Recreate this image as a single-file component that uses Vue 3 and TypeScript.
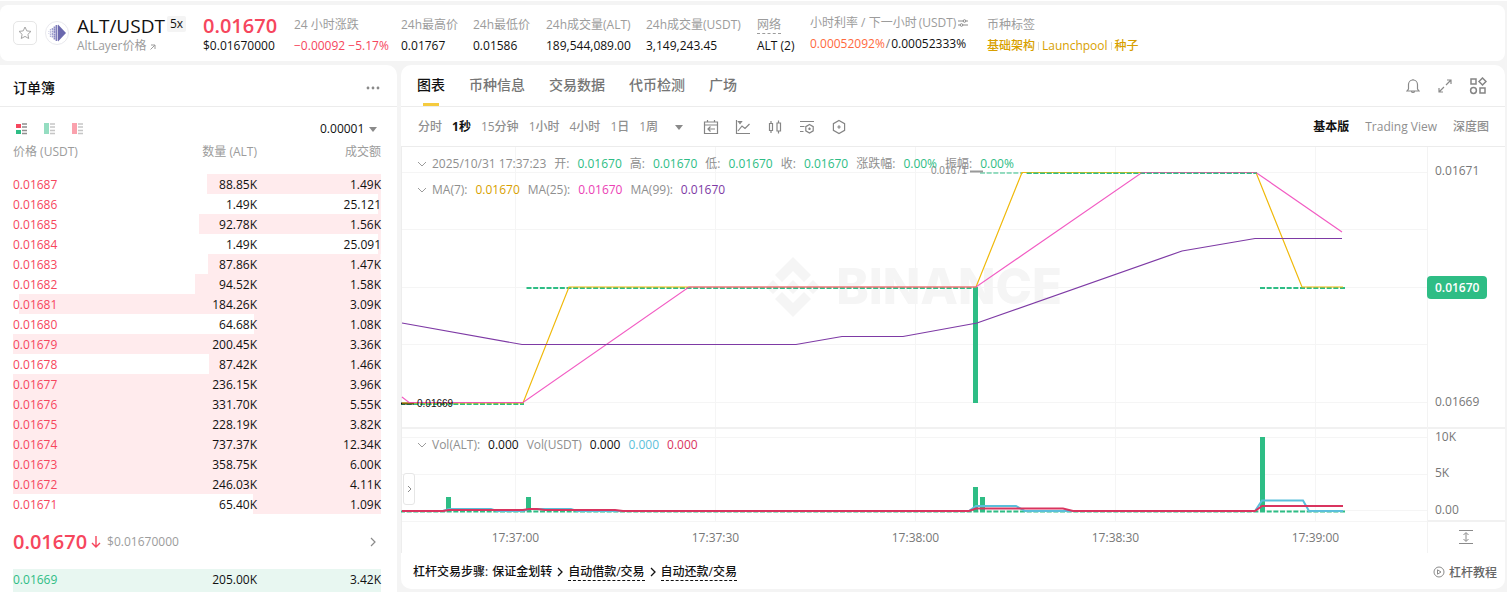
<script setup lang="ts">
interface Level { price: string; amount: string; total: string; depth: number }
interface Stat { label: string; value: string; dotted?: boolean }

const stats: Stat[] = [
  { label: '24h最高价', value: '0.01767' },
  { label: '24h最低价', value: '0.01586' },
  { label: '24h成交量(ALT)', value: '189,544,089.00' },
  { label: '24h成交量(USDT)', value: '3,149,243.45' },
  { label: '网络', value: 'ALT (2)', dotted: true },
]

const asks: Level[] = [
  { price: '0.01687', amount: '88.85K', total: '1.49K', depth: 47.4 },
  { price: '0.01686', amount: '1.49K', total: '25.121', depth: 0.8 },
  { price: '0.01685', amount: '92.78K', total: '1.56K', depth: 49.5 },
  { price: '0.01684', amount: '1.49K', total: '25.091', depth: 0.8 },
  { price: '0.01683', amount: '87.86K', total: '1.47K', depth: 46.9 },
  { price: '0.01682', amount: '94.52K', total: '1.58K', depth: 50.5 },
  { price: '0.01681', amount: '184.26K', total: '3.09K', depth: 98.4 },
  { price: '0.01680', amount: '64.68K', total: '1.08K', depth: 34.5 },
  { price: '0.01679', amount: '200.45K', total: '3.36K', depth: 100 },
  { price: '0.01678', amount: '87.42K', total: '1.46K', depth: 46.7 },
  { price: '0.01677', amount: '236.15K', total: '3.96K', depth: 100 },
  { price: '0.01676', amount: '331.70K', total: '5.55K', depth: 100 },
  { price: '0.01675', amount: '228.19K', total: '3.82K', depth: 100 },
  { price: '0.01674', amount: '737.37K', total: '12.34K', depth: 100 },
  { price: '0.01673', amount: '358.75K', total: '6.00K', depth: 100 },
  { price: '0.01672', amount: '246.03K', total: '4.11K', depth: 100 },
  { price: '0.01671', amount: '65.40K', total: '1.09K', depth: 34.8 },
]

const tabs = ['图表', '币种信息', '交易数据', '代币检测', '广场']
const intervals = ['分时', '1秒', '15分钟', '1小时', '4小时', '1日', '1周']
const ohlc = [
  ['开:', '0.01670'], ['高:', '0.01670'], ['低:', '0.01670'],
  ['收:', '0.01670'], ['涨跌幅:', '0.00%'], ['振幅:', '0.00%'],
]
const averages = [
  ['MA(7):', '0.01670', 'gold'],
  ['MA(25):', '0.01670', 'pink'],
  ['MA(99):', '0.01670', 'purple'],
]

// Plot space: 1026 x 406 units, 200 units for each 30 seconds.
const times = ['17:37:00', '17:37:30', '17:38:00', '17:38:30', '17:39:00']
const gridX = times.map((_, i) => 114.5 + i * 200)
const gridY = [25.5, 82.5, 140.5, 197.5, 255.5, 290.5, 327.5, 363.5, 374.5]
const volumes = [
  { x: 45, h: 14 }, { x: 125, h: 14 }, { x: 572, h: 24 }, { x: 579, h: 14 }, { x: 859, h: 74 },
]
const axis = [
  { y: 24, text: '0.01671' }, { y: 255, text: '0.01669' },
  { y: 290, text: '10K' }, { y: 326, text: '5K' }, { y: 363, text: '0.00' },
]
const pct = (x: number) => `${(x / 1026) * 100}%`
</script>

<template>
  <div class="page">
    <header class="ticker">
      <button class="star" aria-label="收藏">
        <svg width="14" height="14" viewBox="0 0 14 14" fill="none" stroke="#a6a6a6" stroke-linejoin="round"><path d="M7 1l1.8 3.9 4.2.5-3.1 2.9.8 4.2L7 10.4l-3.7 2.1.8-4.2L1 5.4l4.2-.5z" /></svg>
      </button>
      <svg class="coin" width="24" height="24" viewBox="0 0 24 24">
        <circle cx="12" cy="12" r="11.5" fill="#fff" stroke="#e9e9ee" />
        <path d="M13 3.500L21 12l-8 8.500z" fill="#6a68ae" />
        <path d="M11.500 4v16" stroke="#7f7dbb" stroke-width="1.800" />
        <path d="M9.500 5.500v13" stroke="#8a89c2" stroke-width="1.800" stroke-dasharray="2 .3" />
        <path d="M7.500 7v10" stroke="#9fa0cf" stroke-width="1.600" stroke-dasharray="2 .5" />
        <path d="M5.500 8v8" stroke="#b0b1d8" stroke-width="1.300" stroke-dasharray="1.500 .7" />
        <path d="M3.800 10v4" stroke="#cfd0e8" stroke-dasharray="1 1" />
      </svg>
      <div class="stack">
        <h1 class="pair">ALT/USDT<span class="badge">5x</span></h1>
        <a class="sub" href="#">AltLayer价格 <svg width="6" height="6" viewBox="0 0 6 6" fill="none" stroke="#9c9c9c"><path d="M1 1h4v4M5 1L.5 5.500" /></svg></a>
      </div>
      <div class="stack">
        <div class="last">0.01670</div>
        <div>$0.01670000</div>
      </div>
      <div class="stat">
        <div class="label">24 小时涨跌</div>
        <div class="red">−0.00092 −5.17%</div>
      </div>
      <div v-for="s in stats" :key="s.label" class="stat">
        <div class="label"><span :class="{ dotted: s.dotted }">{{ s.label }}</span></div>
        <div>{{ s.value }}</div>
      </div>
      <div class="stat funding">
        <div class="label">小时利率 / 下一小时<span class="unit">(USDT)</span>
          <svg width="10" height="8" viewBox="0 0 10 8" fill="none" stroke="#8a8a8a"><path d="M0 2h5M8 2h2M0 6h2M5 6h5" /><circle cx="6.500" cy="2" r="1.300" /><circle cx="3.500" cy="6" r="1.300" /></svg>
        </div>
        <div><span class="orange">0.00052092%</span><span class="slash">/</span>0.00052333%</div>
      </div>
      <div class="stat">
        <div class="label">币种标签</div>
        <div class="tags"><a href="#">基础架构</a><i></i><a class="latin" href="#">Launchpool</a><i></i><a href="#">种子</a></div>
      </div>
    </header>

    <main class="body">
      <section class="panel book">
        <div class="book-head">
          <h2>订单簿</h2>
          <button aria-label="更多">
            <svg width="14" height="4" viewBox="0 0 14 4" fill="#8a8a8a"><circle cx="2" cy="2" r="1.400" /><circle cx="7" cy="2" r="1.400" /><circle cx="12" cy="2" r="1.400" /></svg>
          </button>
        </div>
        <div class="book-tools">
          <div class="modes">
            <button aria-label="买卖盘"><svg width="12" height="12" viewBox="0 0 12 12"><path d="M0 1h5v4H0z" fill="#f6465d" /><path d="M0 7h5v4H0z" fill="#2ebd85" /><path d="M6 1h5M6 4h5M6 7.500h5M6 10.500h5" stroke="#8f8f8f" stroke-width="1.600" /></svg></button>
            <button class="dim" aria-label="买盘"><svg width="12" height="12" viewBox="0 0 12 12"><path d="M0 0h5v11H0z" fill="#2ebd85" /><path d="M6 1h5M6 4h5M6 7.500h5M6 10.500h5" stroke="#8f8f8f" stroke-width="1.600" /></svg></button>
            <button class="dim" aria-label="卖盘"><svg width="12" height="12" viewBox="0 0 12 12"><path d="M0 0h5v11H0z" fill="#f6465d" /><path d="M6 1h5M6 4h5M6 7.500h5M6 10.500h5" stroke="#8f8f8f" stroke-width="1.600" /></svg></button>
          </div>
          <label class="step">
            <select aria-label="价格精度"><option>0.00001</option></select>
            <svg width="8" height="5" viewBox="0 0 8 5" fill="#8a8a8a"><path d="M0 0h8L4 5z" /></svg>
          </label>
        </div>
        <table class="levels">
          <thead><tr><th>价格 (USDT)</th><th>数量 (ALT)</th><th>成交额</th></tr></thead>
          <tbody>
            <tr v-for="r in asks" :key="r.price" class="ask" :style="{ backgroundSize: `${r.depth}% 100%` }">
              <td>{{ r.price }}</td><td>{{ r.amount }}</td><td>{{ r.total }}</td>
            </tr>
          </tbody>
        </table>
        <div class="mid">
          <strong>0.01670</strong>
          <svg width="10" height="12" viewBox="0 0 10 12" fill="none" stroke="#f6465d" stroke-width="1.400"><path d="M5 0v11M1 7l4 4 4-4" /></svg>
          <span>$0.01670000</span>
          <button aria-label="更多成交"><svg width="6" height="10" viewBox="0 0 6 10" fill="none" stroke="#8a8a8a" stroke-width="1.200"><path d="M1 1l4 4-4 4" /></svg></button>
        </div>
        <table class="levels bids">
          <tbody><tr class="bid"><td>0.01669</td><td>205.00K</td><td>3.42K</td></tr></tbody>
        </table>
      </section>

      <section class="panel chart">
        <nav class="tabs">
          <button v-for="(t, i) in tabs" :key="t" :class="{ on: i === 0 }">{{ t }}</button>
          <div class="tab-icons">
            <button aria-label="提醒"><svg width="16" height="16" viewBox="0 0 16 16" fill="none" stroke="#8a8a8a" stroke-width="1.200"><path d="M3.500 11V6.500a4.500 4.500 0 019 0V11l1.500 2H2zM6.500 13.500c.3 1.300 2.700 1.300 3 0M8 2V1" /></svg></button>
            <button aria-label="全屏"><svg width="16" height="16" viewBox="0 0 16 16" fill="none" stroke="#8a8a8a" stroke-width="1.200"><path d="M10 2h4v4M6 14H2v-4M14 2L9 7M7 9l-5 5" /></svg></button>
            <button aria-label="布局"><svg width="18" height="18" viewBox="0 0 18 18" fill="none" stroke="#858585" stroke-width="1.500"><path d="M2 2h5v5H2zM11 11h5v5h-5zM13.500 1L17 4.500 13.500 8 10 4.500z" /><circle cx="4.500" cy="13.500" r="2.900" /></svg></button>
          </div>
        </nav>

        <div class="tools">
          <button v-for="(t, i) in intervals" :key="t" :class="{ on: i === 1 }">{{ t }}</button>
          <button class="caret" aria-label="更多周期"><svg width="8" height="5" viewBox="0 0 8 5" fill="#8a8a8a"><path d="M0 0h8L4 5z" /></svg></button>
          <div class="tool-icons">
            <button aria-label="日期"><svg width="16" height="16" viewBox="0 0 16 16" fill="none" stroke="#858585" stroke-width="1.200"><path d="M1.500 3h13v11.500h-13zM1.500 6h13M4.500 3V1M11.500 3V1M12 10H5M7.500 7.500L5 10l2.500 2.500" /></svg></button>
            <button aria-label="指标"><svg width="16" height="16" viewBox="0 0 16 16" fill="none" stroke="#858585" stroke-width="1.200"><path d="M1.500 1v13.500H15M3 12l4-5 3 2.500L14.500 5M3.500 2.500h3L5 4.500z" /></svg></button>
            <button aria-label="图形"><svg width="16" height="16" viewBox="0 0 16 16" fill="none" stroke="#858585" stroke-width="1.200"><path d="M2.500 4.500h3v7h-3zM4 2v2.500M4 11.500V14M10 4h3.500v8H10zM11.500 1.500V4M11.500 12v2.500" /></svg></button>
            <button aria-label="隐藏"><svg width="16" height="16" viewBox="0 0 16 16" fill="none" stroke="#858585" stroke-width="1.200"><path d="M1 2.500h14M1 7.500h4.500M1 12.500h3.500M10.500 5.500l3.700 2.200v4.100l-3.700 2.200-3.700-2.200V7.700zM10.500 8.500v2.600M9.200 9.800h2.600" /></svg></button>
            <button aria-label="设置"><svg width="16" height="16" viewBox="0 0 16 16" fill="none" stroke="#858585" stroke-width="1.200"><path d="M8 1.500l5.600 3.200v6.600L8 14.500l-5.600-3.200V4.700zM8 6.300v3.400M6.300 8h3.400" /></svg></button>
          </div>
          <div class="views">
            <button class="on">基本版</button><button class="latin">Trading View</button><button>深度图</button>
          </div>
        </div>

        <div class="stage">
          <div class="plot">
            <div class="watermark">
              <svg width="54" height="60" viewBox="0 0 54 60" fill="#f5f5f5"><path d="M27 0l18 18-7 7-11-11-11 11-7-7zM27 60L9 42l7-7 11 11 11-11 7 7zM27 23l7 7-7 7-7-7zM7 23l7 7-7 7-7-7zM47 23l7 7-7 7-7-7z" /></svg>
              <span>BINANCE</span>
            </div>
            <svg class="canvas" viewBox="0 0 1026 406" preserveAspectRatio="none" fill="none">
              <g stroke="#f5f5f5">
                <path v-for="x in gridX" :key="x" :d="`M${x} 0V375`" />
                <path v-for="y in gridY" :key="y" :d="`M0 ${y}H1026`" />
              </g>
              <path d="M0 281H1026" stroke="#f1f1f1" stroke-width="2" />
              <path d="M.5 0V406" stroke="#ededed" />
              <g stroke="#2ebd85" stroke-width="2" stroke-dasharray="5 1.667">
                <path d="M-1 257H123M125.500 141H574M859 141H944" />
                <path d="M579 26H622" opacity=".5" />
                <path d="M625.700 26H856" />
                <path d="M-1 364.500H944" />
              </g>
              <path d="M574.500 140V256" stroke="#2ebd85" stroke-width="5" />
              <rect v-for="v in volumes" :key="v.x" :x="v.x" :y="364 - v.h" width="5" :height="v.h" fill="#2ebd85" />
              <path d="M0 256.500H13" stroke="#111" stroke-width="2" />
              <path d="M1 256H122L168 140H575L621 25.500H855L901 140H942" stroke="#f0b90b" stroke-width="1.200" />
              <path d="M1 250L8 255.500H122L288 140H575L741 25.500H855L941 85" stroke="#f03fb8" stroke-width="1.200" opacity=".85" />
              <path d="M625.700 26H856" stroke="#2ebd85" stroke-width="2" stroke-dasharray="5 1.667" opacity=".45" />
              <path d="M1 176L121 197.500H395L441 189.500H502L576 176 781 104 854 91.500H941" stroke="#7e3aa5" stroke-width="1.200" />
              <path d="M569 24.500H582" stroke="#999" stroke-width="2" />
              <path d="M1 364H42L48 362H90L96 364H122L128 362H170L176 364H568L575 359H615L624 364H854L861 353.500H902L908 364H942" stroke="#5bbfdb" stroke-width="2" />
              <path d="M1 364H42L48 363H122L128 362H136L144 363H214L222 364H568L575 361.500H662L672 364H854L861 359H942" stroke="#d9345f" stroke-width="2" />
            </svg>
            <span class="mark low" :style="{ left: pct(16) }">0.01669</span>
            <span class="mark high" :style="{ left: pct(530) }">0.01671</span>
            <div class="legend first">
              <svg width="10" height="6" viewBox="0 0 10 6"><path d="M1 1l4 4 4-4" /></svg>
              <span>2025/10/31 17:37:23</span>
              <template v-for="o in ohlc" :key="o[0]"><span>{{ o[0] }}</span><b class="green">{{ o[1] }}</b></template>
            </div>
            <div class="legend second">
              <svg width="10" height="6" viewBox="0 0 10 6"><path d="M1 1l4 4 4-4" /></svg>
              <template v-for="a in averages" :key="a[0]"><span>{{ a[0] }}</span><b :class="a[2]">{{ a[1] }}</b></template>
            </div>
            <div class="legend third">
              <svg width="10" height="6" viewBox="0 0 10 6"><path d="M1 1l4 4 4-4" /></svg>
              <span>Vol(ALT):</span><b>0.000</b><span>Vol(USDT)</span><b>0.000</b><b class="blue">0.000</b><b class="crimson">0.000</b>
            </div>
            <button class="handle" aria-label="展开工具"><svg width="5" height="8" viewBox="0 0 5 8" fill="none" stroke="#8a8a8a"><path d="M1 1l3 3-3 3" /></svg></button>
            <span v-for="(t, i) in times" :key="t" class="time" :style="{ left: pct(gridX[i]) }">{{ t }}</span>
          </div>
          <div class="axis">
            <span v-for="a in axis" :key="a.text" :style="{ top: `${a.y}px` }">{{ a.text }}</span>
            <strong>0.01670</strong>
            <button aria-label="自动缩放"><svg width="14" height="16" viewBox="0 0 14 16" fill="none" stroke="#8a8a8a"><path d="M0 1.500h14M0 14.500h14M7 4v8M4.500 6L7 3.500 9.500 6M4.500 10L7 12.500 9.500 10" /></svg></button>
          </div>
        </div>

        <footer class="steps">
          <span>杠杆交易步骤:</span><span>保证金划转</span>
          <svg width="6" height="10" viewBox="0 0 6 10"><path d="M1 1l4 4-4 4" /></svg>
          <a href="#">自动借款/交易</a>
          <svg width="6" height="10" viewBox="0 0 6 10"><path d="M1 1l4 4-4 4" /></svg>
          <a href="#">自动还款/交易</a>
          <a class="guide" href="#"><svg width="12" height="12" viewBox="0 0 12 12" fill="none" stroke="#8a8a8a"><circle cx="6" cy="6" r="5" /><path d="M4.500 3.800L8 6 4.500 8.200z" /></svg>杠杆教程</a>
        </footer>
      </section>
    </main>
  </div>
</template>

<style>
body { background: #f4f4f4; }
</style>

<style scoped>
.page {
  height: 100vh;
  overflow: hidden;
  box-sizing: border-box;
  display: flex;
  flex-direction: column;
  gap: 4px;
  padding: 4px 2px 0 0;
  border-top: 1px solid #fff;
  font: 12px/18px "Open Sans", "Noto Sans CJK SC", sans-serif;
  color: #111;
}
button { border: 0; padding: 0; margin: 0; background: none; font: inherit; color: inherit; display: flex; align-items: center; justify-content: center; }
a { color: inherit; text-decoration: none; }
h1, h2 { margin: 0; }
svg { flex: none; }

.ticker {
  flex: none;
  display: grid;
  grid-template-columns: 24px 24px 118px 83px 99px 64px 65px 92px 103px 45px 169px auto;
  justify-content: start;
  align-items: end;
  column-gap: 8px;
  height: 44px;
  padding: 7px 13px 5px;
  background: #fff;
  border-radius: 8px;
  white-space: nowrap;
}
.star { width: 24px; height: 24px; box-sizing: border-box; border: 1px solid #e6e6e6; border-radius: 5px; align-self: center; margin-bottom: 2px; }
.coin { align-self: center; margin-bottom: 2px; }
.pair { display: flex; align-items: center; gap: 2px; height: 20px; font-size: 19px; line-height: 20px; font-weight: 500; }
.badge { font-size: 12px; line-height: 16px; font-weight: 400; padding: 0 3px; background: #f4f4f4; border-radius: 2px; margin-bottom: 4px; }
.sub { display: block; color: #9c9c9c; }
.last { font-size: 20px; line-height: 20px; font-weight: 600; color: #f6465d; }
.stat { line-height: 21px; }
.stack { line-height: 20px; }
.label { color: #9c9c9c; }
.dotted { border-bottom: 1px dashed #9c9c9c; }
.funding { align-self: start; }
.funding svg { margin-left: 2px; }
.unit { margin-left: 2px; }
.red { color: #f6465d; }
.orange { color: #ff693d; }
.slash { color: #777; padding: 0 1px; }
.tags { display: flex; align-items: center; gap: 3px; color: #d89f00; font-weight: 500; }
.tags i { width: 1px; height: 8px; background: #ddd; }
.tags .latin, .tools .latin { font-weight: 400; }

.body { flex: 1; min-height: 0; display: grid; grid-template-columns: 397px 1fr; column-gap: 4px; align-items: start; }
.panel { background: #fff; border-radius: 10px; overflow: hidden; }
.book { border-radius: 0 10px 0 0; height: 100%; }
.book-head { display: flex; justify-content: space-between; align-items: center; height: 41px; padding: 0 17px 0 13px; border-bottom: 1px solid #ececec; }
.book-head h2 { font-size: 14px; font-weight: 500; padding-top: 4px; }
.book-head button { padding-top: 4px; }
.book-tools { display: flex; justify-content: space-between; align-items: center; padding: 11px 20px 2px 16px; }
.modes { display: flex; gap: 16px; }
.dim { opacity: .5; }
.step { display: flex; align-items: center; gap: 4px; height: 22px; }
.step select { appearance: none; border: 0; padding: 0; background: none; font: inherit; color: inherit; }
.levels { display: block; padding: 0 16px 0 13px; }
.levels thead, .levels tbody { display: block; }
.levels tr { display: grid; grid-template-columns: 122fr 122fr 124fr; line-height: 20px; height: 20px; }
.levels thead tr { height: 32px; line-height: 20px; }
.levels th { padding: 0; font-weight: 400; color: #9c9c9c; text-align: right; }
.levels td { padding: 2px 0 0; line-height: 18px; text-align: right; }
.levels th:first-child, .levels td:first-child { text-align: left; }
.ask, .bid { background: linear-gradient(#ffebed, #ffebed) right / 100% 100% no-repeat; }
.ask td:first-child { color: #f6465d; }
.levels .bid { background-image: linear-gradient(#e8f7f1, #e8f7f1); height: 24px; }
.bid td:first-child { color: #2ebd85; }
.mid { display: flex; align-items: center; height: 55px; padding: 0 21px 0 13px; }
.mid strong { font-size: 20px; font-weight: 600; color: #f6465d; margin-right: 4px; }
.mid span { margin-left: 6px; color: #9c9c9c; }
.mid button { margin-left: auto; }

.tabs { display: flex; align-items: stretch; gap: 24px; height: 41px; padding: 0 18px 0 16px; border-bottom: 1px solid #ececec; font-size: 14px; font-weight: 500; color: #757575; }
.tabs > button { position: relative; padding-bottom: 2px; }
.tabs .on { color: #111; }
.tabs .on::after { content: ""; position: absolute; left: 6px; right: 6px; bottom: 0; height: 3px; background: #f5cb3f; }
.tab-icons { display: flex; align-items: center; gap: 16px; margin-left: auto; }
.tools { display: flex; align-items: center; gap: 10px; height: 38px; padding: 1px 16px 0 17px; border-bottom: 1px solid #ececec; color: #8f8f8f; font-weight: 500; }
.tools .on { color: #111; font-weight: 700; }
.caret { margin-left: 7px; }
.tool-icons { display: flex; gap: 16px; margin-left: 10px; }
.views { display: flex; gap: 16px; margin-left: auto; }

.stage { display: grid; grid-template-columns: 1fr 78px; height: 406px; }
.plot { position: relative; }
.canvas { position: absolute; inset: 0; width: 100%; height: 100%; }
.watermark { position: absolute; inset: 0 0 126px; display: flex; align-items: center; justify-content: center; gap: 16px; color: #f5f5f5; font: 800 49px/60px Inter, sans-serif; }
.mark { position: absolute; font: 10px/12px "Liberation Sans", sans-serif; }
.low { top: 251px; color: #111; }
.high { top: 18px; color: #8a8a8a; }
.legend { position: absolute; left: 16px; display: flex; align-items: center; gap: 8px; color: #8f8f8f; white-space: nowrap; }
.legend svg { fill: none; stroke: #9c9c9c; margin-right: -3px; }
.legend b { font-weight: 400; color: #111; }
.legend .green { color: #2ebd85; }
.legend .gold { color: #d89f00; }
.legend .pink { color: #eb40b5; }
.legend .purple { color: #7e3aa5; }
.legend .blue { color: #5bbfdb; }
.legend .crimson { color: #d9345f; }
.first { top: 8px; }
.second { top: 34px; }
.third { top: 289px; }
.handle { position: absolute; left: 2px; top: 326px; width: 12px; height: 32px; background: #fff; border: 1px solid #e6e6e6; border-radius: 3px; }
.time { position: absolute; top: 382px; transform: translateX(-50%); color: #777; }
.axis { position: relative; box-shadow: inset 1px 0 #f3f3f3; background: linear-gradient(#f1f1f1, #f1f1f1) 0 280px / 100% 2px no-repeat, linear-gradient(#f1f1f1, #f1f1f1) 0 373px / 100% 2px no-repeat; color: #777; }
.axis span { position: absolute; left: 8px; transform: translateY(-50%); }
.axis strong { position: absolute; left: 0; top: 129px; padding: 0 8px; line-height: 23px; border-radius: 4px; background: #2ebd85; color: #fff; font-weight: 600; }
.axis button { position: absolute; left: 32px; top: 382px; }

.steps { display: flex; align-items: center; gap: 4px; height: 34px; padding: 2px 8px 0 12px; font-weight: 500; }
.steps > svg { fill: none; stroke: #111; stroke-width: 1.3px; margin: 0 1px; }
.steps > a { border-bottom: 1px dashed #111; line-height: 17px; }
.steps .guide { display: flex; align-items: center; gap: 4px; margin-left: auto; border: 0; color: #666; }
</style>
